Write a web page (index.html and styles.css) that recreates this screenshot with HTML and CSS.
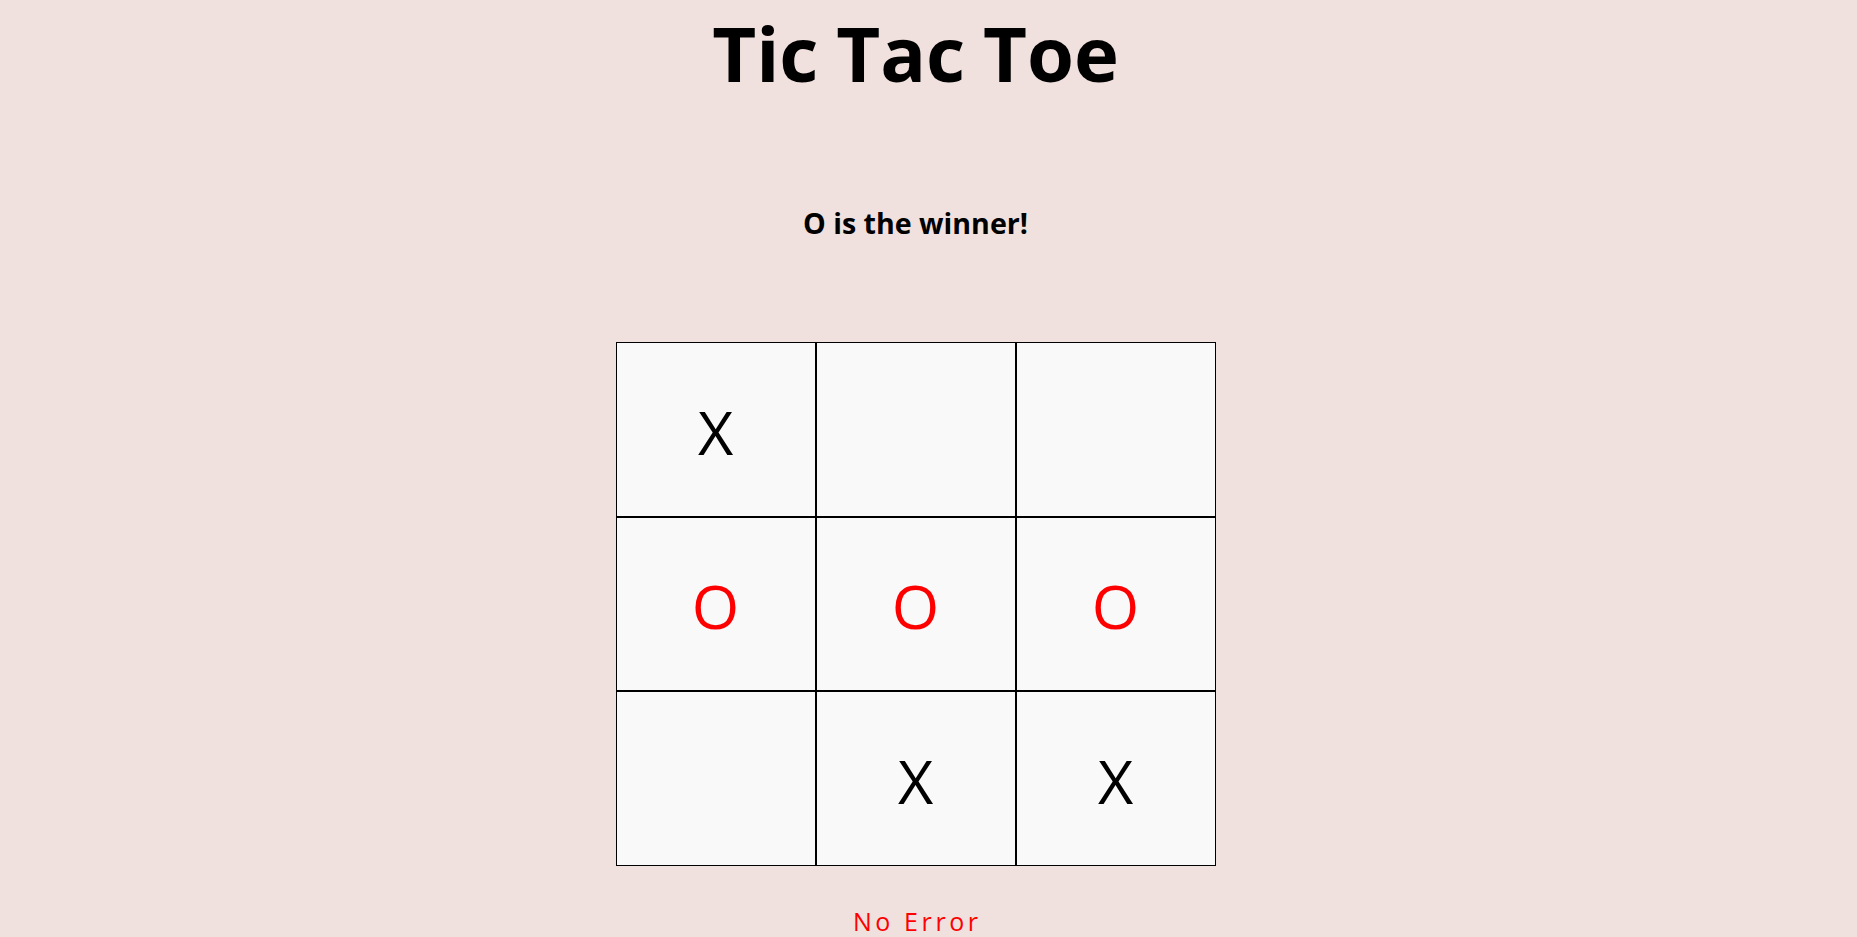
FILE: index.html
```html
<!DOCTYPE html>
<html lang="en">
<head>
<meta charset="utf-8">
<title>Tic Tac Toe</title>
<link rel="stylesheet" href="styles.css">
</head>
<body>
<main class="game">
  <h1 class="title">Tic Tac Toe</h1>
  <h2 class="status">O is the winner!</h2>
  <div class="board">
    <div class="cell x">X</div>
    <div class="cell"></div>
    <div class="cell"></div>
    <div class="cell o">O</div>
    <div class="cell o">O</div>
    <div class="cell o">O</div>
    <div class="cell"></div>
    <div class="cell x">X</div>
    <div class="cell x">X</div>
  </div>
  <p class="error">No Error</p>
</main>
</body>
</html>
```
FILE: styles.css
```css
html, body {
  margin: 0;
  padding: 0;
}
body {
  background: #f0e0de;
  font-family: "Open Sans", "Noto Sans", sans-serif;
  color: #000;
  overflow: hidden;
}
.game {
  width: 1831px;
  display: flex;
  flex-direction: column;
  align-items: center;
  text-align: center;
}
.title {
  margin: 0;
  font-size: 76px;
  line-height: 106px;
  font-weight: 700;
  word-spacing: -2px;
}
.status {
  margin: 97px 0 0;
  font-size: 28.6px;
  line-height: 40px;
  font-weight: 700;
}
.board {
  margin-top: 99px;
  display: grid;
  grid-template-columns: repeat(3, 200px);
  grid-template-rows: repeat(3, 174.67px);
}
.cell {
  box-sizing: border-box;
  border: 1px solid #000;
  background: #f9f9f9;
  display: flex;
  align-items: center;
  justify-content: center;
  padding-top: 5px;
  font-size: 61px;
  line-height: 84px;
  font-weight: 400;
}
.cell.o {
  color: #ff0000;
}
.error {
  margin: 39px 0 0;
  font-size: 25px;
  line-height: 32px;
  font-weight: 400;
  color: #ff0000;
  letter-spacing: 3.6px;
  padding-left: 3.6px;
}
```
